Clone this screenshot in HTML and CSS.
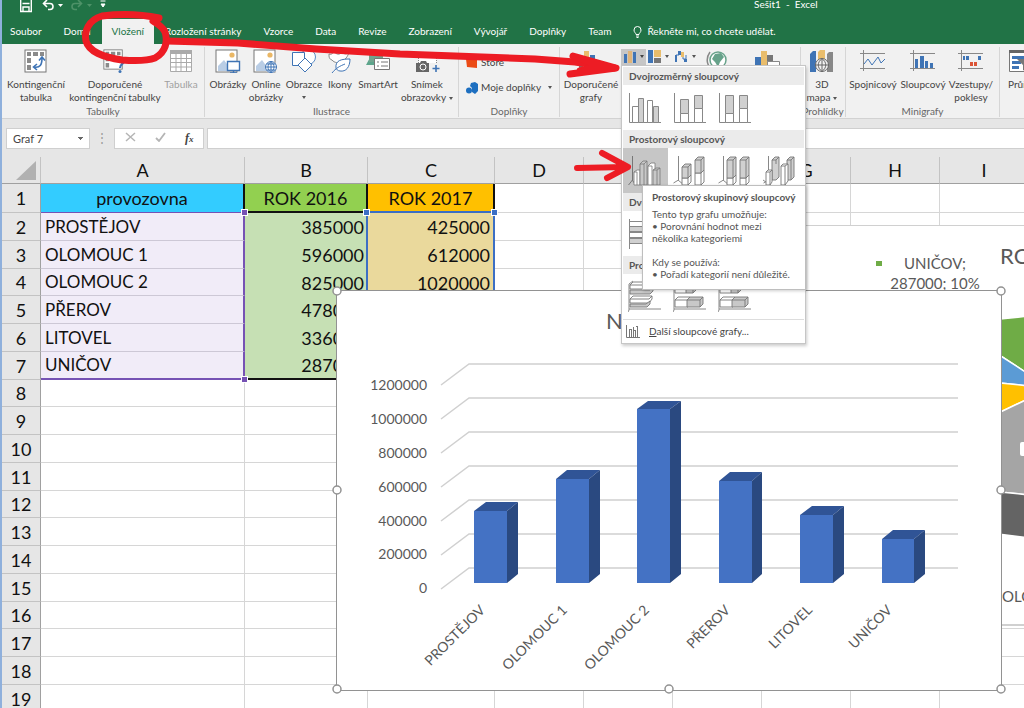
FILE: index.html
```html
<!DOCTYPE html>
<html lang="cs">
<head>
<meta charset="utf-8">
<title>Sešit1 - Excel</title>
<link rel="stylesheet" href="styles.css">
</head>
<body>
<svg class="defs" aria-hidden="true">
  <defs>
    <symbol id="pivot" viewBox="0 0 24 24"><rect x="1" y="1" width="21" height="22" fill="#fff" stroke="#777"/><path d="M3 3h4v4H3zM9 3h5v4H9zM16 3h4v4h-4zM3 9h4v5H3zM3 16h4v5H3z" fill="#8a8a8a"/></symbol>
    <symbol id="picture" viewBox="0 0 24 24"><rect x="1" y="1" width="21" height="22" fill="#fff" stroke="#777"/><circle cx="17" cy="6" r="2.6" fill="#eab765"/><path d="M3 22v-5l6-6 8 11z" fill="#b9cde5"/></symbol>
    <symbol id="col-a" viewBox="0 0 34 34"><path d="M1.500 2v29.500H33" fill="none" stroke="#888"/><g stroke="#888"><path d="M4.500 15.500h6v16h-6zM19.500 9.500h5v22h-5z" fill="#fff"/><path d="M10.500 7.500h5v24h-5zM25.500 15.500h5v16h-5z" fill="#d0d0d0"/></g></symbol>
    <symbol id="col-b" viewBox="0 0 34 34"><path d="M1.500 2v29.500H33" fill="none" stroke="#888"/><g stroke="#888"><path d="M7.500 22.500h8v9h-8zM21.500 17.500h8v14h-8z" fill="#fff"/><path d="M7.500 8.500h8v14h-8zM21.500 4.500h8v13h-8z" fill="#d0d0d0"/></g></symbol>
    <symbol id="col-c" viewBox="0 0 34 34"><path d="M1.500 2v29.500H33" fill="none" stroke="#888"/><g stroke="#888"><path d="M7.500 22.500h8v9h-8zM21.500 17.500h8v14h-8z" fill="#fff"/><path d="M7.500 4.500h8v18h-8zM21.500 4.500h8v13h-8z" fill="#d0d0d0"/></g></symbol>
    <symbol id="col3-a" viewBox="0 0 34 34"><path d="M4.500 2v24l-4 5M4 26l4 5" fill="none" stroke="#777"/><g stroke="#777" stroke-width=".8"><path d="M6 18l3-2h3v15H6zM20 12l3-3h4v22h-7z" fill="#fff"/><path d="M12 10l3-3h4v24h-7zM25 16l3-2h4v17h-7z" fill="#c8c8c8"/><path d="M12 10h4v21M16 10l3-3M20 12h4v19M25 16h4v15M6 18h3v13M29 16l3-2" fill="none"/></g></symbol>
    <symbol id="col3-b" viewBox="0 0 34 34"><path d="M5.500 2v24l-5 3M5 26l6 5" fill="none" stroke="#888"/><g stroke="#777" stroke-width=".9"><path d="M9 24h6l3-3v7l-3 3H9zM22 19h6l3-3v12l-3 3h-6z" fill="#fff"/><path d="M9 13l3-3h6v11l-3 3H9zM22 6l3-3h6v13l-3 3h-6z" fill="#d0d0d0"/><path d="M9 13h6v18M15 13l3-3M22 6h6v25M28 6l3-3" fill="none"/></g></symbol>
    <symbol id="col3-c" viewBox="0 0 34 34"><path d="M5.500 2v24l-5 3M5 26l6 5" fill="none" stroke="#888"/><g stroke="#777" stroke-width=".9"><path d="M9 24h6l3-3v7l-3 3H9zM22 24h6l3-3v7l-3 3h-6z" fill="#fff"/><path d="M9 6l3-3h6v18l-3 3H9zM22 6l3-3h6v18l-3 3h-6z" fill="#d0d0d0"/><path d="M9 6h6v25M15 6l3-3M22 6h6v25M28 6l3-3" fill="none"/></g></symbol>
    <symbol id="col3-d" viewBox="0 0 34 34"><path d="M5.500 2v24l-5 3M0 26l7 5" fill="none" stroke="#888"/><g stroke="#777" stroke-width=".9"><path d="M9 6l3-3h4v20l-3 3H9zM24 6l3-3h4v20l-3 3h-4z" fill="#d0d0d0"/><path d="M3 18l2-2h4v12l-2 3H3zM18 12l2-2h5v17l-3 4h-4z" fill="#fff"/><path d="M3 18h4v13M7 18l2-2M18 12h4v19M22 12l3-2M9 6h4v4M13 6l3-3M24 6h4v20M28 6l3-3" fill="none"/></g></symbol>
    <symbol id="bar-a" viewBox="0 0 34 34"><g stroke="#888"><path d="M1.500 9.500h26v5h-26zM1.500 21.500h20v5h-20z" fill="#d0d0d0"/><path d="M1.500 15.500h22v5h-22z" fill="#fff"/><path d="M1.500 2v30M1.500 4.500h20" fill="none"/></g></symbol>
    <symbol id="bar3-a" viewBox="0 0 34 34"><path d="M5 1L1 4v26l-1 2M1 29h32" fill="none" stroke="#888"/><g stroke="#777" stroke-width=".9"><path d="M2 5l3-3h17l-3 3v4H2zM2 19l3-3h19v3l-3 4H2z" fill="#fff"/><path d="M2 10h20l3-3v4l-3 3H2zM2 24h16l4-3v3l-3 3H2z" fill="#c8c8c8"/><path d="M2 5h17M2 19h19l3-3" fill="none"/></g></symbol>
    <symbol id="bar3-b" viewBox="0 0 34 34"><path d="M5 1L1 4v26l-1 2M1 29h32" fill="none" stroke="#888"/><g stroke="#777" stroke-width=".9"><path d="M2 7l3-3h10v7l-2 2H2zM2 20l3-3h12v8l-2 2H2z" fill="#fff"/><path d="M13 7l3-3h7v6l-3 3h-7zM14 20l3-3h13v7l-3 3H14z" fill="#c8c8c8"/><path d="M2 7h18l3-3M2 20h25l3-3M20 7v6M27 20v7" fill="none"/></g></symbol>
  </defs>
</svg>

<div class="app">
  <header class="top">
    <div class="titlebar">
      <div class="quick">
        <button aria-label="Uložit"><svg width="12" height="13" viewBox="0 0 12 13"><path d="M.700 0v11.500h10.600V0M3 11V7h6v4M2.500 3.500h7" fill="none" stroke="#fff" stroke-width="1.400"/></svg></button>
        <button aria-label="Zpět"><svg width="21" height="12" viewBox="0 0 21 12"><path d="M5 0L1.500 3.500 5 7M2 3.500h6c4 0 4 6 0 6H6" fill="none" stroke="#fff" stroke-width="1.600"/><path d="M16 4h5l-2.500 3z" fill="#fff"/></svg></button>
        <button aria-label="Znovu" disabled><svg width="21" height="12" viewBox="0 0 21 12"><path d="M7 0l3.500 3.500L7 7M10 3.500H4c-4 0-4 6 0 6h2" fill="none" stroke="#4e9268" stroke-width="1.600"/><path d="M16 4h5l-2.500 3z" fill="#4e9268"/></svg></button>
        <button aria-label="Přizpůsobit panel"><svg width="6" height="8" viewBox="0 0 6 8"><path d="M.500 1h5M1 4h4L3 7z" fill="#fff" stroke="#fff"/></svg></button>
      </div>
      <div class="title">Sešit1&nbsp; -&nbsp; Excel</div>
    </div>
    <nav class="tabs">
      <button>Soubor</button><button>Domů</button><button class="active">Vložení</button><button>Rozložení stránky</button><button>Vzorce</button><button>Data</button><button>Revize</button><button>Zobrazení</button><button>Vývojář</button><button>Doplňky</button><button>Team</button>
      <button class="tell"><svg width="9" height="12" viewBox="0 0 9 12"><path d="M3 8.500C3 7 1 6.500 1 4a3.500 3.500 0 017 0c0 2.500-2 3-2 4.500zM3 10h3M3.500 11.500h2" fill="none" stroke="#fff"/></svg>Řekněte mi, co chcete udělat.</button>
    </nav>
  </header>

  <section class="ribbon">
    <div class="group g-tables">
      <div class="tools">
        <button class="w66"><svg width="24" height="24" viewBox="0 0 24 24"><use href="#pivot"/><path d="M8 8h13v14H8z" fill="#fff"/><path d="M10 18c6 1 8-2 8-9M13 15l-3.500 3 3.500 3M15 11.500L18 8l3 3.500" fill="none" stroke="#3f74b5" stroke-width="1.600"/></svg>Kontingenční<br>tabulka</button>
        <button class="w92"><svg width="24" height="24" viewBox="0 0 24 24"><use href="#pivot" width="21" height="21"/><path d="M14 13c0-5 7-5 7-1 0 3-4 3-4 7" fill="none" stroke="#3f74b5" stroke-width="2.200"/><circle cx="17" cy="22.500" r="1.500" fill="#3f74b5"/></svg>Doporučené<br>kontingenční tabulky</button>
        <button class="w40" disabled><svg width="24" height="24" viewBox="0 0 24 24"><path d="M1.500 1.500h21v21h-21z" fill="#fff"/><path d="M1 1h22v4H1z" fill="#aaa"/><path d="M1.500 5v17.500h21V5M1 9.500h22M1 13.500h22M1 18h22M7 4v18M12 4v18M17.500 4v18" fill="none" stroke="#aaa"/></svg>Tabulka</button>
      </div>
      <div class="caption">Tabulky</div>
    </div>
    <div class="group g-pics">
      <div class="tools">
        <button class="w40"><svg width="26" height="24" viewBox="0 0 26 24"><use href="#picture" width="24" height="24"/><path d="M12.500 12.500h12v9h-12zM15 24h7M18.500 21v3" fill="#fff" stroke="#3f74b5" stroke-width="1.400"/></svg>Obrázky</button>
        <button class="w36"><svg width="26" height="24" viewBox="0 0 26 24"><use href="#picture" width="24" height="24"/><circle cx="18" cy="18" r="6" fill="#fff"/><path d="M12.500 18a5.500 5.500 0 1011 0 5.500 5.500 0 10-11 0h11M18 12.500v11M18 12.500c-4 3-4 8 0 11 4-3 4-8 0-11M13.500 15h9M13.500 21h9" fill="none" stroke="#3f74b5"/></svg>Online<br>obrázky</button>
        <button class="w40"><svg width="26" height="24" viewBox="0 0 26 24"><circle cx="17" cy="8" r="7.500" fill="#fff" stroke="#5b8cc6"/><path d="M1.500 3.500h12v13h-12z" fill="#fff" stroke="#3f74b5"/><path d="M14 9l7 7-7 7-7-7z" fill="#fff" stroke="#3f74b5"/></svg>Obrazce<i class="caret"></i></button>
        <button class="w32"><svg width="24" height="24" viewBox="0 0 24 24"><path d="M1 5c3 1 4-1 5-3 2 4 6 4 8 1 3 3 5 2 7 0-2 9-12 14-17 8C1 10 1 8 1 5z" fill="#fff" stroke="#888"/><path d="M8 19c-1-8 6-9 14-9 0 8-4 13-10 12-2 0-4-2-4-3zM4 24c4-5 8-7 13-9" fill="#fff" stroke="#3f74b5"/></svg>Ikony</button>
        <button class="w44"><svg width="26" height="24" viewBox="0 0 26 24"><path d="M1 16l8-15v15z" fill="#5da58c"/><path d="M4 4h14v9H4z" fill="#71a58f"/><path d="M9.500 9.500h15v11h-15z" fill="#fff" stroke="#777"/><path d="M12 13h2M16 13h7M12 17h2M16 17h7" stroke="#777"/></svg>SmartArt</button>
        <button class="w54"><svg width="26" height="24" viewBox="0 0 26 24"><path d="M4.500 14V3.500h18V14" fill="#fff" stroke="#888" stroke-dasharray="1 1"/><path d="M2 14h4l1-2h5l1 2h2v9H2z" fill="#666"/><circle cx="9" cy="18" r="3" fill="#666" stroke="#fff"/><path d="M22 16v7M18.500 19.500h7" stroke="#3f74b5" stroke-width="1.600"/></svg>Snímek<br><span>obrazovky<i class="caret"></i></span></button>
      </div>
      <div class="caption">Ilustrace</div>
    </div>
    <div class="group g-addins">
      <div class="tools list">
        <button><svg width="12" height="12" viewBox="0 0 12 12"><path d="M0 2l11-1v10L1 10z" fill="#eb4b16"/></svg>Store</button>
        <button><svg width="12" height="12" viewBox="0 0 12 12"><path d="M5 1l4-1 3 2v7l-3 3-3-2V6L4 4z" fill="#1d6fc0"/><circle cx="3" cy="8.500" r="3" fill="#1d6fc0"/></svg>Moje doplňky<i class="caret far"></i></button>
      </div>
      <div class="caption">Doplňky</div>
    </div>
    <div class="group g-charts">
      <div class="tools">
        <button class="w60"><svg width="26" height="24" viewBox="0 0 26 24"><path d="M6 2h5v12H6z" fill="#e9bd6c"/><path d="M12 6h5v8h-5z" fill="#3f74b5"/><path d="M1 8h4v12H1z" fill="#777"/><path d="M12 14c0-4 7-4 7 0 0 3-4 3-4 6" fill="none" stroke="#3f74b5" stroke-width="2"/><circle cx="15" cy="23" r="1.200" fill="#3f74b5"/></svg>Doporučené<br>grafy</button>
        <div class="minis">
          <button class="pressed" aria-label="Sloupcový graf"><svg width="22" height="14" viewBox="0 0 22 14"><path d="M1 4h3v9H1z" fill="#3f74b5"/><path d="M5 1h4v12H5z" fill="#e0b478"/><path d="M10 2h3v11h-3z" fill="#3f74b5"/><path d="M17 5h4l-2 3z" fill="#444"/></svg></button>
          <button aria-label="Hierarchický graf"><svg width="22" height="14" viewBox="0 0 22 14"><path d="M0 0h5v13H0z" fill="#3f74b5"/><path d="M6 0h7v7H6z" fill="#e9bd6c"/><path d="M6 8h7v5H6z" fill="#777"/><path d="M17 5h4l-2 3z" fill="#555"/></svg></button>
          <button aria-label="Vodopádový graf"><svg width="22" height="14" viewBox="0 0 22 14"><path d="M0 5h2v7H0zM3 1h3v4H3zM9 9h3v3H9z" fill="#3f74b5"/><path d="M6 2h3v5H6z" fill="#e9bd6c"/><path d="M1 5h3M8 7v2h3M11 5v4" fill="none" stroke="#3f74b5"/><path d="M17 5h4l-2 3z" fill="#555"/></svg></button>
        </div>
        <button class="w40" aria-label="Mapy"><svg width="22" height="24" viewBox="0 0 22 24"><circle cx="12" cy="11" r="8" fill="#fff" stroke="#67a28a" stroke-width="1.500"/><path d="M9 5l6-1 3 4-4 5-2 5-3-5-3-3z" fill="#67a28a"/><path d="M4 3C-1 10 1 18 8 22" fill="none" stroke="#888" stroke-width="1.500"/></svg></button>
        <button class="w60" aria-label="Kontingenční graf"><svg width="26" height="24" viewBox="0 0 26 24"><path d="M1 8h6v12H1z" fill="#3f74b5"/><path d="M7 2h6v18H7z" fill="#e9bd6c"/><path d="M13 6h6v9h-6z" fill="#777"/><path d="M13.500 12.500h12v8h-12z" fill="#fff" stroke="#888"/></svg></button>
      </div>
      <div class="caption">Grafy</div>
    </div>
    <div class="group g-tours">
      <div class="tools">
        <button class="w40"><svg width="26" height="24" viewBox="0 0 26 24"><path d="M1 5l3-3h3v21H1z" fill="#3f74b5"/><path d="M9 3l2-2h5v12H9z" fill="#e9bd6c"/><path d="M18 5l2-2h4v20h-6z" fill="#888"/><circle cx="13" cy="16" r="6.500" fill="#f1f1f1" stroke="#666"/><path d="M6.500 16h13M13 9.500v13M13 9.500c-5 4-5 9 0 13 5-4 5-9 0-13" fill="none" stroke="#666"/></svg>3D<br><span>mapa<i class="caret"></i></span></button>
      </div>
      <div class="caption">Prohlídky</div>
    </div>
    <div class="group g-spark">
      <div class="tools">
        <button class="w52"><svg width="26" height="24" viewBox="0 0 26 24"><path d="M0 4.500h25M0 19.500h25M3.500 1v21" stroke="#888"/><path d="M4 15l4-5 4 6 6-8 3 6 4-4" fill="none" stroke="#3f74b5"/></svg>Spojnicový</button>
        <button class="w48"><svg width="26" height="24" viewBox="0 0 26 24"><path d="M0 4.500h25M0 19.500h25M3.500 1v21" stroke="#888"/><path d="M5 10h3v9H5zM10 7h4v12h-4zM15 12h3v7h-3zM20 14h3v5h-3z" fill="#3f74b5"/></svg>Sloupcový</button>
        <button class="w48"><svg width="26" height="24" viewBox="0 0 26 24"><path d="M0 4.500h25M0 19.500h25M3.500 1v21" stroke="#888"/><path d="M5 7h2v4H5zM8 7h3v4H8zM20 7h3v4h-3z" fill="#3f74b5"/><path d="M12 13h3v4h-3zM16 13h3v4h-3z" fill="#dc5536"/></svg>Vzestupy/<br>poklesy</button>
      </div>
      <div class="caption">Minigrafy</div>
    </div>
    <div class="group g-filter">
      <div class="tools">
        <button class="slicer"><svg width="26" height="24" viewBox="0 0 26 24"><path d="M1.500 1.500h22v21h-22z" fill="#fff" stroke="#777"/><path d="M1 1h23v3H1z" fill="#666"/><path d="M4 7h17v3H4zM4 12h9v3H4zM4 17h7v3H4z" fill="#3f74b5"/><path d="M9 10h15l-5 6v7l-4-2v-5z" fill="#777"/></svg>Průřez</button>
      </div>
    </div>
  </section>

  <div class="formula">
    <select class="namebox" aria-label="Pole názvů"><option>Graf 7</option></select>
    <span class="dots">⋮</span>
    <div class="fx">
      <button aria-label="Storno"><svg width="11" height="10" viewBox="0 0 11 10"><path d="M1 1l9 8M10 1L1 9" stroke="#b5b5b5" stroke-width="1.500"/></svg></button>
      <button aria-label="Zadat"><svg width="11" height="10" viewBox="0 0 11 10"><path d="M1 6l3 3 6-8" fill="none" stroke="#b5b5b5" stroke-width="1.800"/></svg></button>
      <button class="fn">f<small>x</small></button>
    </div>
    <input class="entry" aria-label="Řádek vzorců">
  </div>

  <main class="sheet">
    <table>
      <colgroup><col class="c-row"><col class="c-a"><col class="c-b"><col class="c-c"><col span="6" class="c-n"></colgroup>
      <thead><tr><th><svg class="corner" width="21" height="21" viewBox="0 0 21 21"><path d="M20 1v19H0z" fill="#b1b1b1"/></svg></th><th>A</th><th>B</th><th>C</th><th>D</th><th>E</th><th>F</th><th>G</th><th>H</th><th>I</th></tr></thead>
      <tbody>
        <tr class="first"><th>1</th><td class="h-a">provozovna</td><td class="h-b">ROK 2016</td><td class="h-c">ROK 2017</td><td></td><td></td><td></td><td></td><td></td><td></td></tr>
        <tr><th>2</th><td class="a"><i class="grip tr"></i>PROSTĚJOV</td><td class="b">385000</td><td class="c"><i class="grip blue tl"></i><i class="grip blue tr"></i>425000</td><td></td><td></td><td></td><td></td><td></td><td></td></tr>
        <tr><th>3</th><td class="a">OLOMOUC 1</td><td class="b">596000</td><td class="c">612000</td><td></td><td></td><td></td><td></td><td></td><td></td></tr>
        <tr><th>4</th><td class="a">OLOMOUC 2</td><td class="b">825000</td><td class="c">1020000</td><td></td><td></td><td></td><td></td><td></td><td></td></tr>
        <tr><th>5</th><td class="a">PŘEROV</td><td class="b">478000</td><td class="c"></td><td></td><td></td><td></td><td></td><td></td><td></td></tr>
        <tr><th>6</th><td class="a">LITOVEL</td><td class="b">336000</td><td class="c"></td><td></td><td></td><td></td><td></td><td></td><td></td></tr>
        <tr class="last"><th>7</th><td class="a"><i class="grip br"></i>UNIČOV</td><td class="b">287000</td><td class="c"></td><td></td><td></td><td></td><td></td><td></td><td></td></tr>
        <tr><th>8</th><td></td><td></td><td></td><td></td><td></td><td></td><td></td><td></td><td></td></tr>
        <tr><th>9</th><td></td><td></td><td></td><td></td><td></td><td></td><td></td><td></td><td></td></tr>
        <tr><th>10</th><td></td><td></td><td></td><td></td><td></td><td></td><td></td><td></td><td></td></tr>
        <tr><th>11</th><td></td><td></td><td></td><td></td><td></td><td></td><td></td><td></td><td></td></tr>
        <tr><th>12</th><td></td><td></td><td></td><td></td><td></td><td></td><td></td><td></td><td></td></tr>
        <tr><th>13</th><td></td><td></td><td></td><td></td><td></td><td></td><td></td><td></td><td></td></tr>
        <tr><th>14</th><td></td><td></td><td></td><td></td><td></td><td></td><td></td><td></td><td></td></tr>
        <tr><th>15</th><td></td><td></td><td></td><td></td><td></td><td></td><td></td><td></td><td></td></tr>
        <tr><th>16</th><td></td><td></td><td></td><td></td><td></td><td></td><td></td><td></td><td></td></tr>
        <tr><th>17</th><td></td><td></td><td></td><td></td><td></td><td></td><td></td><td></td><td></td></tr>
        <tr><th>18</th><td></td><td></td><td></td><td></td><td></td><td></td><td></td><td></td><td></td></tr>
        <tr><th>19</th><td></td><td></td><td></td><td></td><td></td><td></td><td></td><td></td><td></td></tr>
      </tbody>
    </table>
  </main>
</div>

<div class="chart pie">
  <svg width="344" height="398" viewBox="680 225 344 398">
    <g stroke="#fff" stroke-width="1.500">
      <path d="M990 319l40-4v59l-40-26z" fill="#6fac46"/>
      <path d="M990 348l40 26v11l-40-4z" fill="#5b9bd5"/>
      <path d="M990 381l40 4v12l-40 19z" fill="#ffc000"/>
      <path d="M990 416l40-19v97l-40-4z" fill="#a5a5a5"/>
      <path d="M990 490l40 4v43l-40-5z" fill="#646464"/>
    </g>
    <rect x="1020" y="441" width="12" height="14" rx="2" fill="#fff"/>
    <rect x="876" y="260" width="6" height="5" fill="#6fac46"/>
    <g fill="#595959" class="label">
      <text x="935" y="268" text-anchor="middle">UNIČOV;</text>
      <text x="935" y="288" text-anchor="middle">287000; 10%</text>
      <text x="1002" y="601">OLOMOUC 1;</text>
      <text x="1000" y="263" class="heading">ROK 2016</text>
    </g>
  </svg>
</div>

<div class="chart column">
  <svg width="664" height="399" viewBox="337 291 664 399">
    <text x="606" y="329" class="heading" fill="#595959">Název grafu</text>
    <path d="M441 385l28-21h489M441 419l28-21h489M441 453l28-21h489M441 487l28-21h489M441 521l28-21h489M441 555l28-21h489M441 589l28-21h489" fill="none" stroke="#d0d0d0" stroke-width="1.500"/>
    <g fill="#595959" class="axis" text-anchor="end">
      <text x="427" y="390">1200000</text><text x="427" y="424">1000000</text><text x="427" y="458">800000</text><text x="427" y="492">600000</text><text x="427" y="526">400000</text><text x="427" y="559">200000</text><text x="427" y="593">0</text>
    </g>
    <g fill="#4472c4"><path d="M474 511h33v72h-33zM556 479h33v104h-33zM637 409h33v174h-33zM719 481h33v102h-33zM800 515h33v68h-33zM882 539h32v44h-32z"/></g>
    <g fill="#305496"><path d="M474 511l12-9h32l-11 9zM556 479l11-9h33l-11 9zM637 409l11-8h33l-11 8zM719 481l11-9h32l-10 9zM800 515l12-9h32l-11 9zM882 539l11-9h32l-11 9z"/></g>
    <g fill="#2a4980"><path d="M507 511l11-9v72l-11 9zM589 479l11-9v104l-11 9zM670 409l11-8v173l-11 9zM752 481l10-9v102l-10 9zM833 515l11-9v68l-11 9zM914 539l11-9v44l-11 9z"/></g>
    <g fill="#595959" class="cats" text-anchor="end">
      <text transform="translate(486 611) rotate(-45)">PROSTĚJOV</text>
      <text transform="translate(568 611) rotate(-45)">OLOMOUC 1</text>
      <text transform="translate(650 611) rotate(-45)">OLOMOUC 2</text>
      <text transform="translate(731 611) rotate(-45)">PŘEROV</text>
      <text transform="translate(813 611) rotate(-45)">LITOVEL</text>
      <text transform="translate(893 611) rotate(-45)">UNIČOV</text>
    </g>
    <g fill="#fff" stroke="#929292" stroke-width="1.500">
      <circle cx="337" cy="291" r="4"/><circle cx="1001" cy="291" r="4"/><circle cx="337" cy="490" r="4"/><circle cx="1001" cy="490" r="4"/><circle cx="337" cy="689" r="4"/><circle cx="669" cy="689" r="4"/><circle cx="1001" cy="689" r="4"/>
    </g>
  </svg>
</div>

<div class="menu">
  <h2>Dvojrozměrný sloupcový</h2>
  <div class="choices">
    <button aria-label="Skupinový"><svg><use href="#col-a"/></svg></button>
    <button aria-label="Skládaný"><svg><use href="#col-b"/></svg></button>
    <button aria-label="100% skládaný"><svg><use href="#col-c"/></svg></button>
  </div>
  <h2>Prostorový sloupcový</h2>
  <div class="choices">
    <button class="hot" aria-label="Prostorový skupinový"><svg><use href="#col3-a"/></svg></button>
    <button aria-label="Prostorový skládaný"><svg><use href="#col3-b"/></svg></button>
    <button aria-label="Prostorový 100% skládaný"><svg><use href="#col3-c"/></svg></button>
    <button aria-label="Prostorový"><svg><use href="#col3-d"/></svg></button>
  </div>
  <h2>Dvojrozměrný pruhový</h2>
  <div class="choices">
    <button aria-label="Pruhový"><svg><use href="#bar-a"/></svg></button>
  </div>
  <h2>Prostorový pruhový</h2>
  <div class="choices">
    <button aria-label="Prostorový pruhový"><svg><use href="#bar3-a"/></svg></button>
    <button aria-label="Skládaný pruhový"><svg><use href="#bar3-b"/></svg></button>
    <button aria-label="100% skládaný pruhový"><svg><use href="#bar3-b"/></svg></button>
  </div>
  <button class="more"><svg width="14" height="13" viewBox="0 0 14 13"><path d="M.500 0v12.500H14M3.500 4v8M5.500 4v8M7.500 2v10M9.500 5v7M11.500 1v11M3 4.500h3M8 5.500h2M10 1.500h2" fill="none" stroke="#777"/></svg><span><u>D</u>alší sloupcové grafy...</span></button>
</div>

<div class="tooltip" role="tooltip">
  <strong>Prostorový skupinový sloupcový</strong>
  <p>Tento typ grafu umožňuje:<br>• Porovnání hodnot mezi<br>několika kategoriemi</p>
  <p>Kdy se používá:<br>• Pořadí kategorií není důležité.</p>
</div>

<svg class="ink" width="1024" height="708" viewBox="0 0 1024 708" aria-hidden="true">
  <g fill="none" stroke="#ed1c24" stroke-linecap="round" stroke-linejoin="round">
    <path d="M159 18C140 14 118 14 102 16C88 20 84 32 86 41C89 52 103 57 122 60C135 61 147 61 155 58C166 52 168 41 165 32C163 27 158 24 153 21" stroke-width="7"/>
    <path d="M167 41L238 43L316 49L400 54L535 59L575 62L614 68" stroke-width="7"/>
    <path d="M573 56L616 68L570 74M582 59L600 66L580 71" stroke-width="7"/>
    <path d="M577 168L626 167M602 153L628 167L607 178" stroke-width="6"/>
  </g>
</svg>
</body>
</html>
```

FILE: styles.css
```css
* { box-sizing: border-box; }
html, body { height: 100%; }
body {
  margin: 0;
  position: relative;
  overflow: hidden;
  font: 10px/13px Lato, "Noto Sans", sans-serif;
  color: #444;
  background: #fff;
}
button {
  font: inherit;
  color: inherit;
  background: none;
  border: 0;
  padding: 0;
  margin: 0;
}
.defs { position: absolute; width: 0; height: 0; }
.app {
  height: 100%;
  display: flex;
  flex-direction: column;
  border-left: 2px solid #8fb0dc;
  overflow: hidden;
}

.top { background: #217346; color: #fff; }
.titlebar { height: 19px; display: flex; }
.quick { flex: 1; display: flex; align-items: flex-start; gap: 10px; padding-left: 18px; }
.quick button { display: flex; height: 12px; }
.quick button:nth-child(3), .quick button:nth-child(4) { margin-left: -2px; }
.title { flex: 1 0 240px; max-width: 270px; line-height: 8px; }
.tabs { display: flex; height: 25px; }
.tabs button { padding: 0 11px; white-space: nowrap; }
.tabs button:first-child { padding-left: 8px; }
.tabs .active { background: #f1f1f1; color: #217346; padding: 0 10px; }
.tabs .tell { display: flex; align-items: center; gap: 5px; }

.ribbon {
  display: flex;
  height: 75px;
  background: #f1f1f1;
  border-bottom: 1px solid #d2d2d2;
  overflow: hidden;
}
.group {
  flex: none;
  display: flex;
  flex-direction: column;
  border-right: 1px solid #d6d6d6;
  margin: 3px 0 1px;
}
.g-tables { width: 203px; }
.g-pics { width: 254px; }
.g-addins { width: 101px; }
.g-charts { width: 241px; }
.g-tours { width: 45px; }
.g-spark { width: 154px; }
.g-filter { flex: 1 0 24px; border: 0; }
.tools { flex: 1; display: flex; align-items: flex-start; padding: 2px 1px 0; }
.tools > button {
  flex: none;
  display: flex;
  flex-direction: column;
  align-items: center;
  white-space: nowrap;
}
.tools > button > svg { margin-bottom: 5px; }
.tools button:disabled { color: #a0a0a0; }
.tools .slicer { align-items: flex-start; padding-left: 7px; }
.caption { text-align: center; color: #666; line-height: 12px; }
.w32 { width: 32px; } .w36 { width: 36px; } .w40 { width: 40px; } .w44 { width: 44px; }
.w48 { width: 48px; } .w52 { width: 52px; } .w54 { width: 54px; } .w60 { width: 60px; }
.w66 { width: 66px; } .w92 { width: 92px; }
.caret {
  display: inline-block;
  border: 2px solid transparent;
  border-top: 3px solid #555;
  border-bottom: 0;
  margin-left: 3px;
  vertical-align: middle;
}
button > .caret { margin: 5px 0 0; }
.g-pics .tools { padding-left: 3px; }
.tools.list { flex-direction: column; gap: 12px; padding: 9px 7px 0; }
.tools.list button { flex-direction: row; gap: 3px; }
.tools.list svg { margin: 0; }
.caret.far { margin: 0 0 0 4px; }
.minis { display: flex; gap: 5px; }
.minis button { display: flex; width: 22px; height: 18px; padding-top: 1px; }
.minis .pressed { background: #c6c6c6; width: 25px; margin-right: -3px; padding-left: 2px; }

.formula {
  display: flex;
  flex: none;
  height: 38px;
  padding: 9px 0 8px 4px;
  background: #e6e6e6;
}
.namebox {
  appearance: none;
  width: 84px;
  border: 1px solid #cfcfcf;
  border-radius: 0;
  padding: 0 6px;
  font: inherit;
  font-size: 11px;
  color: #444;
  background-color: #fff;
  background-image: linear-gradient(#666, #666), linear-gradient(#666, #666), linear-gradient(#666, #666);
  background-position: 71px 8px, 72px 9px, 73px 10px;
  background-size: 5px 1px, 3px 1px, 1px 1px;
  background-repeat: no-repeat;
}
.dots { width: 24px; text-align: center; font-size: 12px; line-height: 20px; color: #999; }
.fx { display: flex; width: 90px; justify-content: space-around; background: #fff; border: 1px solid #cfcfcf; }
.fn { font: italic bold 12px/16px "Liberation Serif", serif; }
.fn small { font-size: 9px; }
.entry { flex: 1; min-width: 0; margin-left: 3px; border: 1px solid #cfcfcf; border-right: 0; background: #fff; }

.sheet { flex: 1; min-height: 0; overflow: hidden; background: #fff; }
table { table-layout: fixed; width: 1026px; border-spacing: 0; font-size: 18px; line-height: 20px; color: #111; }
.c-row { width: 39px; } .c-a { width: 204px; } .c-b { width: 123px; } .c-c { width: 127px; } .c-n { width: 89px; }
th, td { padding: 0 3px; border-right: 1px solid #d6d6d6; border-bottom: 1px solid #d6d6d6; white-space: nowrap; }
th { background: #e6e6e6; font-weight: 400; text-align: center; border-color: #c3c3c3; }
td { position: relative; }
thead tr { height: 27px; }
thead th { border-bottom-color: #a0a0a0; }
tbody th { border-right-color: #a0a0a0; }
.corner { display: block; margin-left: 11px; }
tbody tr { height: 28px; }
tbody tr:nth-child(4n) { height: 27px; }
tbody .first { height: 29px; }
.first td { text-align: center; }
.first .h-a { background: #33ccff; border-right: 2px solid #111; border-bottom: 1px solid #7652b4; }
.first .h-b { background: #92d050; border-right: 2px solid #111; border-bottom: 2px solid #111; }
.first .h-c { background: #ffc000; border-right: 2px solid #111; border-bottom: 2px solid #3c6fc4; }
.a { font-size: 17px; padding-left: 4px; background: #f1ecf8; border-right: 2px solid #7652b4; border-bottom-color: #cdc8d6; }
.b { background: #c6e0b4; text-align: right; border-bottom: 0; border-right: 2px solid #3c6fc4; padding-right: 2px; }
.c { background: #ead99c; text-align: right; border-bottom: 0; border-right: 2px solid #3c6fc4; }
.last .a { border-bottom: 2px solid #7652b4; }
.last .b { border-bottom: 2px solid #111; }
.grip { position: absolute; width: 5px; height: 5px; background: #7652b4; outline: 1px solid #fff; z-index: 1; }
.grip.blue { background: #3c6fc4; }
.tr { top: -3px; right: -4px; }
.tl { top: -3px; left: -4px; }
.br { bottom: -4px; right: -4px; }

.chart { position: absolute; background: #fff; }
.chart svg { display: block; }
.chart text { font-family: Lato, sans-serif; }
.pie { left: 680px; top: 225px; border-top: 1px solid #d0d0d0; border-bottom: 2px solid #d0d0d0; }
.column { left: 336px; top: 290px; border: 1px solid #929292; }
.column svg { overflow: visible; }
.label { font-size: 15px; }
.axis { font-size: 14px; }
.cats { font-size: 14px; }
.chart .heading { font-size: 22px; }

.menu {
  position: absolute;
  left: 621px;
  top: 65px;
  width: 185px;
  padding: 1px;
  background: #fff;
  border: 1px solid #c6c6c6;
  box-shadow: 1px 2px 3px rgba(0, 0, 0, .2);
}
.menu h2 { margin: 0; padding: 0 6px; font-size: 10px; line-height: 18px; background: #ebebeb; color: #555; white-space: nowrap; }
.choices { display: flex; height: 45px; }
.choices button { display: flex; width: 45px; padding: 6px 5px; }
.choices svg { width: 34px; height: 34px; flex: none; }
.hot { background: #c6c6c6; }
.more { display: flex; width: 100%; height: 23px; align-items: center; gap: 9px; padding-left: 3px; border-top: 1px solid #ddd; }

.tooltip {
  position: absolute;
  left: 642px;
  top: 185px;
  width: 164px;
  padding: 5px 9px 9px;
  line-height: 12px;
  background: #fff;
  border: 1px solid #bebebe;
  box-shadow: 1px 1px 3px rgba(0, 0, 0, .2);
  color: #555;
  white-space: nowrap;
}
.tooltip strong { display: block; margin-bottom: 5px; }
.tooltip p { margin: 0 0 12px; }
.tooltip p:last-child { margin: 0; }
.ink { position: absolute; left: 0; top: 0; pointer-events: none; }
```
